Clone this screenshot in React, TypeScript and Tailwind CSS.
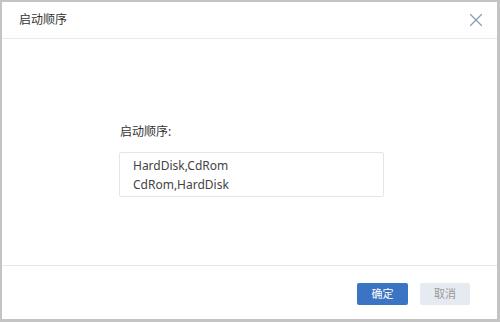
import { X } from 'lucide-react';

const orders = ['HardDisk,CdRom', 'CdRom,HardDisk'];

export default function App() {
  return (
    <div
      className="w-[500px] h-[322px] bg-[#c4c4c4] pt-[2px] pl-[2px] pr-[3px] pb-[3px]"
      style={{ fontFamily: '"Noto Sans", "Noto Sans CJK SC", sans-serif' }}
    >
      <div className="w-full h-full bg-white flex flex-col">
        <div className="h-[37px] flex items-center justify-between pl-[17px] pr-[10px] border-b border-[#e6eaf0] shrink-0">
          <span className="text-[12px] text-[#333]">启动顺序</span>
          <X className="w-[22px] h-[22px] text-[#8a9ab0]" strokeWidth={1.3} />
        </div>
        <div className="flex-1 flex flex-col pl-[117px] pt-[85px]">
          <div className="text-[12px] text-[#333] leading-[16px] ml-[1px]">启动顺序:</div>
          <div className="mt-[12px] w-[265px] h-[45px] border border-[#e6e6e6] rounded-[2px] flex flex-col justify-center pl-[13px]">
            {orders.map((o) => (
              <div key={o} className="text-[12px] text-[#444] leading-[19px]">
                {o}
              </div>
            ))}
          </div>
        </div>
        <div className="h-[54px] border-t border-[#e8e8e8] flex items-start pt-[17px] justify-end gap-[12px] pr-[27px] shrink-0">
          <button className="w-[51px] h-[22px] bg-[#3a74c2] text-white text-[11px] rounded-[2px]">确定</button>
          <button className="w-[50px] h-[22px] bg-[#e6ebf1] text-[#999] text-[11px] rounded-[2px]">取消</button>
        </div>
      </div>
    </div>
  );
}
